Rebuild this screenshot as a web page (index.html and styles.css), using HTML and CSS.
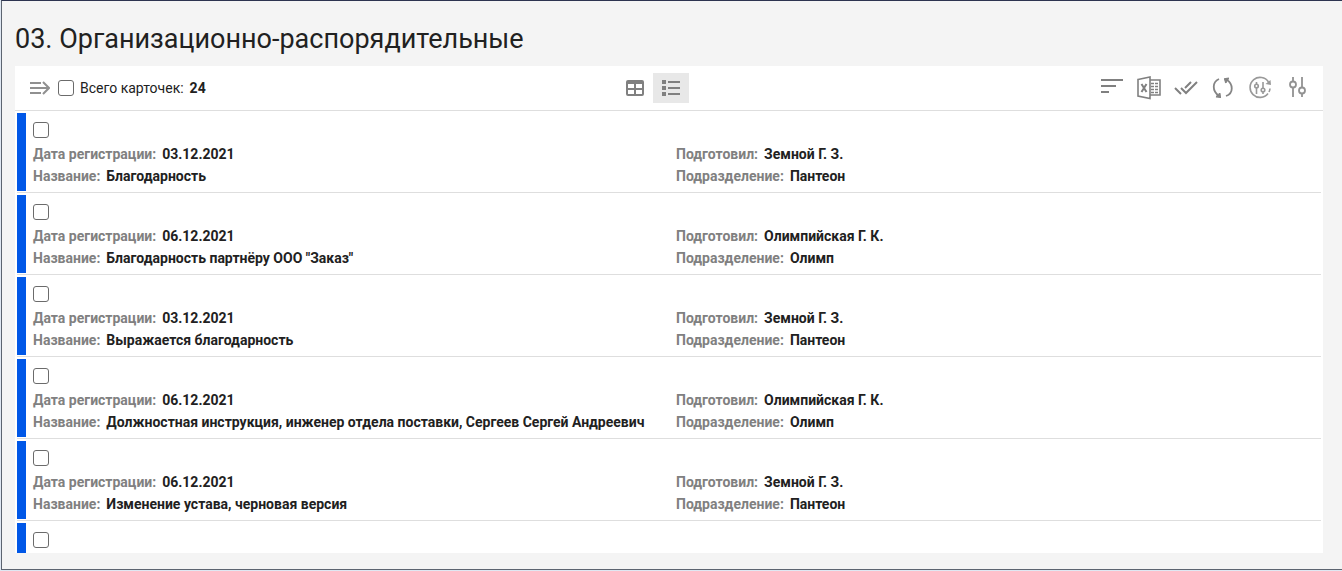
FILE: index.html
```
<!DOCTYPE html>
<html lang="ru">
<head>
<meta charset="utf-8">
<title>03. Организационно-распорядительные</title>
<link rel="stylesheet" href="styles.css">
</head>
<body>
<main class="panel">
  <h1 class="title">03. Организационно-распорядительные</h1>
  <section class="board">
    <header class="toolbar">
      <div class="summary">
        <button class="icon-btn expand" type="button" aria-label="Развернуть"><svg width="20" height="14" viewBox="0 0 20 14" fill="none" stroke="#909090" stroke-width="2"><path d="M0 2h11M0 7h19M0 12h11M13 1l6 6-6 6"/></svg></button>
        <input class="check" type="checkbox" id="all">
        <label for="all">Всего карточек:</label>
        <b class="count">24</b>
      </div>
      <div class="views">
        <button class="view-btn" type="button" aria-label="Таблица"><svg width="18" height="16" viewBox="0 0 18 16"><path fill="#808080" fill-rule="evenodd" d="M2 0h14a2 2 0 0 1 2 2v12a2 2 0 0 1-2 2H2a2 2 0 0 1-2-2V2a2 2 0 0 1 2-2zM2 4v4h6V4zM10 4v4h6V4zM2 10v4h6v-4zM10 10v4h6v-4z"/></svg></button>
        <button class="view-btn active" type="button" aria-label="Список"><svg width="18" height="16" viewBox="0 0 18 16" fill="#808080"><path d="M0 0h4v4H0zM0 6h4v4H0zM0 12h4v4H0zM6 1h12v2H6zM6 7h12v2H6zM6 13h12v2H6z"/></svg></button>
      </div>
      <div class="actions">
        <button class="icon-btn" type="button" aria-label="Сортировка"><svg width="24" height="24" viewBox="0 0 24 24" fill="#808080"><path d="M1 3h22v2H1zM1 9h15v2H1zM1 15h8v2H1z"/></svg></button>
        <button class="icon-btn" type="button" aria-label="Выгрузить в Excel"><svg width="24" height="24" viewBox="0 0 24 24" fill="none" stroke="#808080" stroke-width="1.6"><path d="M1 3.500L13 1v21.500L1 20zM13 4h10v15H13"/><path d="M4.500 8l5 8M9.500 8l-5 8" stroke-width="2"/><path d="M14 7.500h3M18 7.500h3M14 10.500h3M18 10.500h3M14 13.500h3M18 13.500h3M14 16.500h3M18 16.500h3"/></svg></button>
        <button class="icon-btn" type="button" aria-label="Отметить"><svg width="24" height="24" viewBox="0 0 24 24" fill="none" stroke="#808080" stroke-width="2"><path d="M1 12l6 6M7 12l5 5L23 6M11 12l6-6"/></svg></button>
        <button class="icon-btn" type="button" aria-label="Обновить"><svg width="24" height="24" viewBox="0 0 24 24" fill="none" stroke="#858585" stroke-width="1.800"><path d="M8 3C1 6 1 15 8 20M15 20c8-3 7-12 1-16"/><path fill="#808080" stroke="none" d="M5 20.500l5 1.500-1-5zM13 3l5-1-3 5z"/><path d="M5 20.500l4 .5-.5-4M18 2.500L14 3l1 4"/></svg></button>
        <button class="icon-btn" type="button" aria-label="Сбросить настройки"><svg width="24" height="24" viewBox="0 0 24 24" fill="none" stroke="#999" stroke-width="1.600"><path d="M20.500 6A10 10 0 1 0 20 17.500M22 12.500a10 10 0 0 1-1 3.500"/><path fill="#999" stroke="none" d="M17.500 8l5-4 .5 5z"/><path d="M8.500 6v2M8.500 12v6M15 6v6M15 16v2"/><circle cx="8.500" cy="10" r="1.800"/><circle cx="15" cy="14" r="1.800"/></svg></button>
        <button class="icon-btn" type="button" aria-label="Настройки"><svg width="24" height="24" viewBox="0 0 24 24" fill="none" stroke="#929292" stroke-width="1.800"><path d="M8 1v5M8 12v9M17 1v11M17 18v3"/><circle cx="8" cy="8.500" r="3"/><circle cx="17" cy="14.500" r="3"/></svg></button>
      </div>
    </header>
    <div class="list">
      <article class="card">
        <input class="check" type="checkbox" aria-label="Благодарность">
        <dl class="fields">
          <div class="field"><dt>Дата регистрации:</dt><dd>03.12.2021</dd></div>
          <div class="field"><dt>Подготовил:</dt><dd>Земной Г. З.</dd></div>
          <div class="field"><dt>Название:</dt><dd>Благодарность</dd></div>
          <div class="field"><dt>Подразделение:</dt><dd>Пантеон</dd></div>
        </dl>
      </article>
      <article class="card">
        <input class="check" type="checkbox" aria-label="Благодарность партнёру">
        <dl class="fields">
          <div class="field"><dt>Дата регистрации:</dt><dd>06.12.2021</dd></div>
          <div class="field"><dt>Подготовил:</dt><dd>Олимпийская Г. К.</dd></div>
          <div class="field"><dt>Название:</dt><dd>Благодарность партнёру ООО "Заказ"</dd></div>
          <div class="field"><dt>Подразделение:</dt><dd>Олимп</dd></div>
        </dl>
      </article>
      <article class="card">
        <input class="check" type="checkbox" aria-label="Выражается благодарность">
        <dl class="fields">
          <div class="field"><dt>Дата регистрации:</dt><dd>03.12.2021</dd></div>
          <div class="field"><dt>Подготовил:</dt><dd>Земной Г. З.</dd></div>
          <div class="field"><dt>Название:</dt><dd>Выражается благодарность</dd></div>
          <div class="field"><dt>Подразделение:</dt><dd>Пантеон</dd></div>
        </dl>
      </article>
      <article class="card">
        <input class="check" type="checkbox" aria-label="Должностная инструкция">
        <dl class="fields">
          <div class="field"><dt>Дата регистрации:</dt><dd>06.12.2021</dd></div>
          <div class="field"><dt>Подготовил:</dt><dd>Олимпийская Г. К.</dd></div>
          <div class="field"><dt>Название:</dt><dd>Должностная инструкция, инженер отдела поставки, Сергеев Сергей Андреевич</dd></div>
          <div class="field"><dt>Подразделение:</dt><dd>Олимп</dd></div>
        </dl>
      </article>
      <article class="card">
        <input class="check" type="checkbox" aria-label="Изменение устава">
        <dl class="fields">
          <div class="field"><dt>Дата регистрации:</dt><dd>06.12.2021</dd></div>
          <div class="field"><dt>Подготовил:</dt><dd>Земной Г. З.</dd></div>
          <div class="field"><dt>Название:</dt><dd>Изменение устава, черновая версия</dd></div>
          <div class="field"><dt>Подразделение:</dt><dd>Пантеон</dd></div>
        </dl>
      </article>
      <article class="card">
        <input class="check" type="checkbox" aria-label="Карточка 6">
      </article>
    </div>
  </section>
</main>
</body>
</html>
```
FILE: styles.css
```
* { box-sizing: border-box; }

body {
  margin: 0;
  height: 100vh;
  padding: 0 0 1px 1px;
  background: #dfe7f2;
  color: #212121;
  font-family: Roboto, "Liberation Sans", sans-serif;
  font-size: 14px;
}

.panel {
  height: 100%;
  display: flex;
  flex-direction: column;
  padding: 20px 19px 16px 13px;
  background: #f4f4f4;
  border: 1px solid #5c6470;
  border-top-color: #2d3450;
  border-right: 0;
}

.title {
  margin: 0 0 9px;
  font-size: 27px;
  line-height: 36px;
  font-weight: 400;
}

.board {
  flex: 1;
  min-height: 0;
  display: flex;
  flex-direction: column;
  background: #fff;
}

.toolbar {
  flex: none;
  height: 45px;
  display: flex;
  justify-content: space-between;
  align-items: center;
  padding: 0 14px 0 15px;
  border-bottom: 1px solid #dedede;
}

.summary {
  display: flex;
  align-items: center;
  gap: 6px;
}

.count { font-weight: 700; }

.check {
  flex: none;
  appearance: none;
  width: 16px;
  height: 16px;
  margin: 0;
  border: 1px solid #6b6b6b;
  border-radius: 3px;
  background: #fff;
}

.check:checked { background: #0057e7; }

button {
  display: flex;
  align-items: center;
  justify-content: center;
  padding: 0;
  border: 0;
  background: none;
  cursor: pointer;
}

.expand { margin-right: 2px; }

.views { display: flex; }

.view-btn {
  width: 36px;
  height: 30px;
}

.view-btn.active { background: #e8e8e8; }

.actions {
  display: flex;
  gap: 13px;
}

.list {
  flex: 1;
  min-height: 0;
  overflow: hidden;
  padding: 0 2px;
}

.card {
  height: 82px;
  border-bottom: 1px solid #dedede;
  padding: 11px 2px 0 16px;
  background: linear-gradient(#0057e7, #0057e7) 0 2px / 9px 78px no-repeat;
}

.card .check { display: block; }

.fields {
  display: grid;
  grid-template-columns: repeat(2, minmax(0, 1fr));
  margin: 5px 0 0;
  line-height: 22px;
  font-weight: 700;
}

.field {
  display: flex;
  gap: 6px;
  white-space: nowrap;
}

dt { color: #808080; }

dd { margin: 0; }
```
